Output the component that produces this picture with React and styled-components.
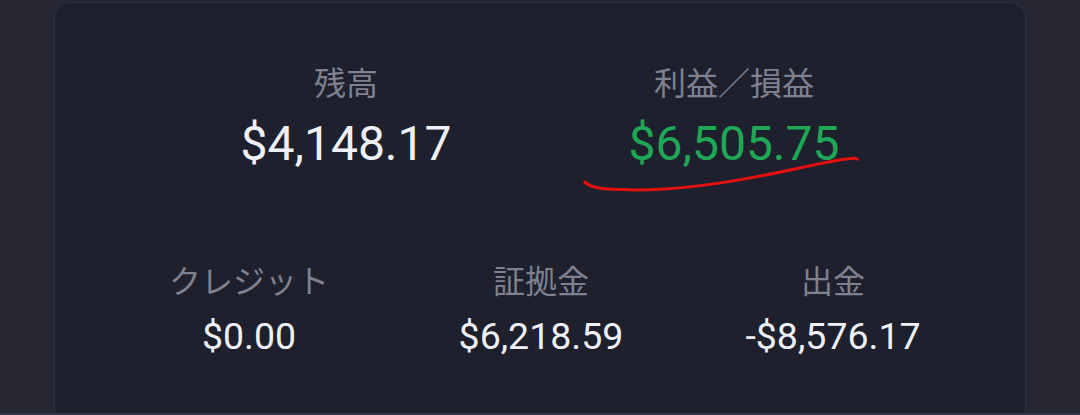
import styled, { createGlobalStyle } from "styled-components";

const GlobalStyle = createGlobalStyle`
  html, body {
    margin: 0;
    padding: 0;
    background: #262733;
  }
  body {
    font-family: Roboto, "Noto Sans CJK JP", sans-serif;
  }
`;

const Page = styled.div`
  height: 415px;
  display: flex;
  flex-direction: column;
  overflow: hidden;
  background: #262733;
`;

const Card = styled.div`
  position: relative;
  flex: 1;
  margin: 2px 54px 0;
  padding: 58px 48px 0;
  background: #1e202d;
  border: 1px solid #2b2f42;
  border-bottom: none;
  border-radius: 16px 16px 0 0;
  display: flex;
  flex-direction: column;
`;

const Row = styled.div`
  display: grid;
  grid-template-columns: repeat(${(p) => p.cols}, 1fr);
  width: ${(p) => p.width}px;
  margin: 0 auto;
  margin-top: ${(p) => p.top || 0}px;
`;

const Stat = styled.div`
  display: flex;
  flex-direction: column;
  align-items: center;
  gap: 15px;
`;

const Label = styled.div`
  font-family: "Noto Sans CJK JP", sans-serif;
  font-size: 32px;
  line-height: 40px;
  color: #7e818f;
  white-space: nowrap;
`;

const Value = styled.div`
  font-family: Roboto, sans-serif;
  font-size: ${(p) => (p.big ? 48 : 37.5)}px;
  line-height: ${(p) => (p.big ? 56 : 44)}px;
  color: ${(p) => (p.green ? "#1fa757" : "#eef0f6")};
  white-space: nowrap;
`;

const Scribble = styled.svg`
  position: absolute;
  left: 0;
  top: 0;
  width: 100%;
  height: 100%;
  pointer-events: none;
`;

const BottomLine = styled.div`
  height: 2px;
  background: #2e3347;
`;

const App = () => (
  <Page>
    <GlobalStyle />
    <Card>
      <Row cols={2} width={776}>
        <Stat>
          <Label>残高</Label>
          <Value big>$4,148.17</Value>
        </Stat>
        <Stat>
          <Label>利益／損益</Label>
          <Value big green>
            $6,505.75
          </Value>
        </Stat>
      </Row>
      <Row cols={3} width={876} top={87}>
        <Stat>
          <Label>クレジット</Label>
          <Value>$0.00</Value>
        </Stat>
        <Stat>
          <Label>証拠金</Label>
          <Value>$6,218.59</Value>
        </Stat>
        <Stat>
          <Label>出金</Label>
          <Value>-$8,576.17</Value>
        </Stat>
      </Row>
      <Scribble viewBox="0 0 972 412" preserveAspectRatio="none">
        <path
          d="M531 180 C536 185 545 187 566 187.5 C600 189 640 186 690 177 C730 170 760 162 790 157 C800 156 803 155.5 804 157"
          fill="none"
          stroke="#e3100f"
          strokeWidth="3"
          strokeLinecap="round"
        />
      </Scribble>
    </Card>
    <BottomLine />
  </Page>
);

export default App;
